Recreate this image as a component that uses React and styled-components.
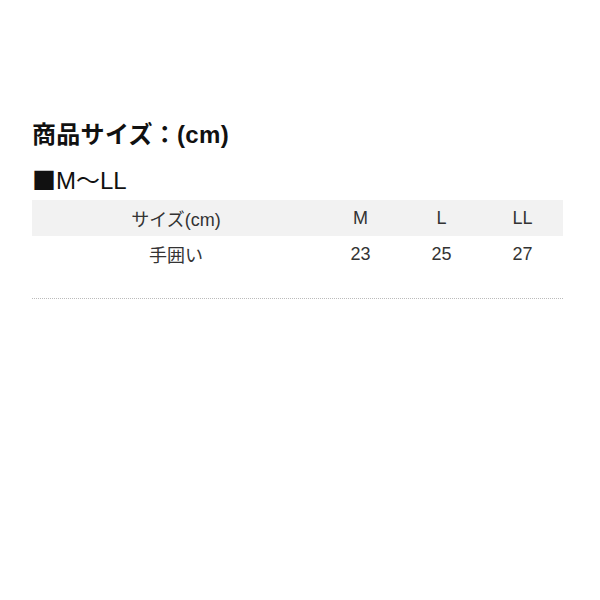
import React from 'react'
import styled, { createGlobalStyle } from 'styled-components'

const Global = createGlobalStyle`
body {
  margin: 0;
  background: #fff;
  font-family: "Liberation Sans", Arial, "Noto Sans CJK JP", sans-serif;
  color: #222;
}
`
const Page = styled.div`
padding: 118px 37px 0 32px;
`
const Title = styled.h2`
margin: 0;
font-size: 24px;
font-weight: bold;
line-height: 34px;
color: #111;
letter-spacing: 0.3px;
`
const Sub = styled.p`
margin: 10px 0 0;
font-size: 24px;
line-height: 34px;
height: 38px;
color: #111;
`
const Mark = styled.span`
font-family: "Noto Sans CJK JP", sans-serif;
`
const Table = styled.table`
width: 100%;
border-collapse: collapse;
font-size: 18px;
color: #333;
`
const Row = styled.tr`
background: ${p => (p.$head ? '#f2f2f2' : 'transparent')};
`
const Cell = styled.td`
height: 36px;
padding: 0;
text-align: center;
width: ${p => (p.$first ? '288px' : 'auto')};
`
const Divider = styled.div`
margin-top: 26px;
border-top: 1px dotted #bbb;
`

const rows = [
  ['サイズ(cm)', 'M', 'L', 'LL'],
  ['手囲い', '23', '25', '27'],
]

export default function App() {
  return (
    <Page>
      <Global />
      <Title>商品サイズ：(cm)</Title>
      <Sub><Mark>■</Mark>M〜LL</Sub>
      <Table>
        <tbody>
          {rows.map((r, i) => (
            <Row key={i} $head={i === 0}>
              {r.map((c, j) => (
                <Cell key={j} $first={j === 0}>{c}</Cell>
              ))}
            </Row>
          ))}
        </tbody>
      </Table>
      <Divider />
    </Page>
  )
}
